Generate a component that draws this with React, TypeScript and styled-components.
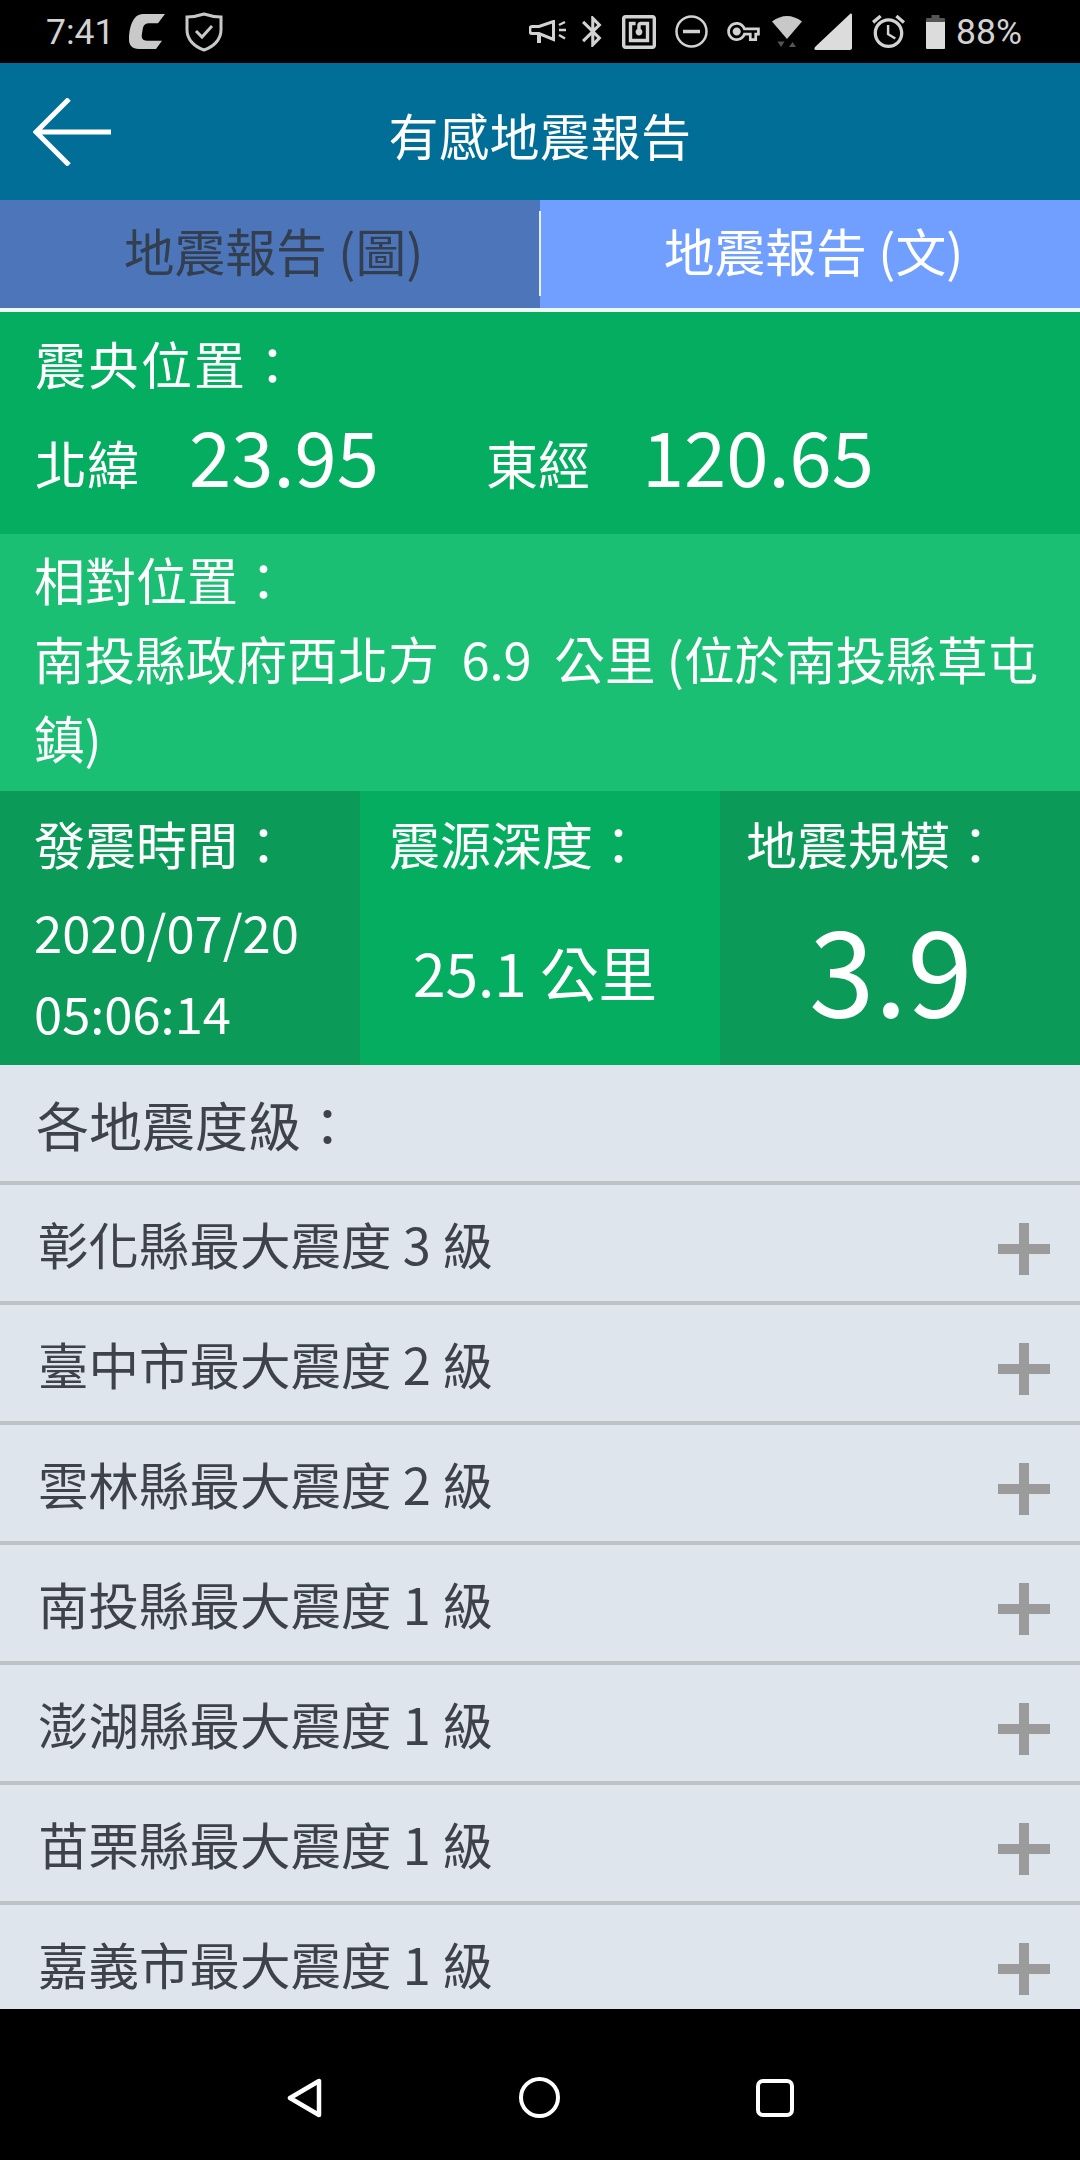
import styled, { createGlobalStyle } from "styled-components";

const GlobalStyle = createGlobalStyle`
  html, body {
    margin: 0;
    padding: 0;
    background: #000;
  }
  * {
    box-sizing: border-box;
  }
`;

const Screen = styled.div`
  width: 1080px;
  height: 2160px;
  display: flex;
  flex-direction: column;
  overflow: hidden;
  font-family: "Noto Sans CJK TC", "Noto Sans", sans-serif;
  color: #fff;
`;

const StatusBar = styled.div`
  height: 63px;
  flex: none;
  background: #000;
  display: flex;
  align-items: center;
  justify-content: space-between;
  padding: 0 58px 0 46px;
  color: #d2d2d2;
  font-family: Roboto, sans-serif;
  font-size: 35.5px;
`;

const StatusGroup = styled.div`
  display: flex;
  align-items: center;
`;

const StatusIcon = styled.svg<{ $left: number }>`
  display: block;
  flex: none;
  margin-left: ${(p) => p.$left}px;
`;

const Battery = styled.span`
  margin-left: 11px;
`;

const Header = styled.header`
  height: 137px;
  flex: none;
  background: #016e97;
  display: grid;
  grid-template-columns: 1fr auto 1fr;
  align-items: center;
  padding-left: 33px;
`;

const Title = styled.h1`
  margin: 4px 0 0 -33px;
  font-size: 50px;
  font-weight: 400;
  line-height: 1;
  letter-spacing: 0.5px;
`;

const Tabs = styled.div`
  height: 108px;
  flex: none;
  display: grid;
  grid-template-columns: 1fr 1fr;
`;

const Tab = styled.div<{ $active?: boolean }>`
  position: relative;
  display: flex;
  align-items: center;
  justify-content: center;
  padding: 0 0 9px 7px;
  font-size: 50.8px;
  background: ${(p) => (p.$active ? "#709fff" : "#4c76b9")};
  color: ${(p) => (p.$active ? "#fff" : "#333f50")};
  &::before {
    content: "";
    display: ${(p) => (p.$active ? "block" : "none")};
    position: absolute;
    left: -1px;
    top: 11px;
    bottom: 12px;
    width: 2px;
    background: #e8eefb;
  }
`;

const TabRule = styled.div`
  height: 4px;
  flex: none;
  background: #f0f8f4;
`;

const EpicenterPanel = styled.section`
  height: 222px;
  flex: none;
  background: #04ad5f;
  padding: 19px 35px 0;
`;

const Label = styled.div`
  font-size: 51px;
  line-height: 64px;
  white-space: nowrap;
`;

const WideLabel = styled(Label)`
  letter-spacing: 2px;
`;

const CoordRow = styled.div`
  display: flex;
  align-items: center;
  margin-top: 13px;
  height: 92px;
`;

const CoordName = styled.span<{ $left?: number }>`
  font-size: 52px;
  margin-top: 16px;
  margin-left: ${(p) => p.$left ?? 0}px;
`;

const CoordValue = styled.span<{ $left: number }>`
  font-size: 76px;
  line-height: 1;
  margin-left: ${(p) => p.$left}px;
`;

const RelativePanel = styled.section`
  height: 257px;
  flex: none;
  background: #1bbf73;
  padding: 13px 34px 0;
`;

const RelativeLabel = styled(Label)`
  margin-bottom: 8px;
`;

const RelativeLine = styled.div`
  font-size: 50.6px;
  line-height: 79px;
  white-space: nowrap;
`;

const StatsRow = styled.section`
  height: 274px;
  flex: none;
  display: grid;
  grid-template-columns: 360px 360px 360px;
`;

const StatCell = styled.div<{ $dark?: boolean; $pad: number }>`
  background: ${(p) => (p.$dark ? "#0c9a59" : "#04ad5f")};
  padding: 20px 0 0 ${(p) => p.$pad}px;
  display: flex;
  flex-direction: column;
`;

const StatBody = styled.div`
  flex: 1;
  display: flex;
  flex-direction: column;
  justify-content: center;
  padding-top: 4px;
`;

const TimeLine = styled.div`
  font-size: 50.7px;
  line-height: 81px;
  white-space: nowrap;
`;

const Depth = styled.div`
  font-size: 58.6px;
  line-height: 1;
  margin-left: 24px;
  white-space: nowrap;
`;

const Magnitude = styled.div`
  font-size: 118px;
  line-height: 1;
  margin: 0 0 12px 63px;
`;

const List = styled.section`
  flex: 1;
  min-height: 0;
  overflow: hidden;
  background: #dfe5ec;
  color: #3e434b;
`;

const ListHeading = styled.div`
  height: 120px;
  padding: 2px 36px 0;
  display: flex;
  align-items: center;
  font-size: 53px;
  border-bottom: 4px solid #bcc2c5;
`;

const Row = styled.div`
  height: 120px;
  padding: 0 30px 1px 38px;
  display: flex;
  align-items: center;
  justify-content: space-between;
  font-size: 50.5px;
  border-bottom: 4px solid #bcc2c5;
`;

const Plus = styled.div`
  width: 52px;
  height: 52px;
  margin-top: 12px;
  background:
    linear-gradient(#9b9b9b, #9b9b9b) center / 10px 100% no-repeat,
    linear-gradient(#9b9b9b, #9b9b9b) center / 100% 10px no-repeat;
`;

const NavBar = styled.nav`
  height: 151px;
  flex: none;
  background: #000;
  display: grid;
  grid-template-columns: repeat(3, 235px);
  padding: 26px 0 0 187px;
  align-items: center;
  justify-items: center;
`;

const rows = [
  ["彰化縣", 3],
  ["臺中市", 2],
  ["雲林縣", 2],
  ["南投縣", 1],
  ["澎湖縣", 1],
  ["苗栗縣", 1],
  ["嘉義市", 1],
] as const;

function App() {
  return (
    <Screen>
      <GlobalStyle />
      <StatusBar>
        <StatusGroup>
          <span>7:41</span>
          <StatusIcon $left={15} width="36" height="35" viewBox="0 0 36 34" preserveAspectRatio="none">
            <path
              d="M14 0H36L29 9H20C17 9 15 10 14 13L13 19C12 24 14 26 18 26H33L27 34H10C3 34 0 30 0 25C0 15 3 0 14 0Z"
              fill="#c9c9c9"
            />
          </StatusIcon>
          <StatusIcon $left={20} width="38" height="40" viewBox="0 0 38 40" fill="none">
            <path
              d="M19 2C25 4 31 5 36 5V18C36 28 28 35 19 38C10 35 2 28 2 18V5C7 5 13 4 19 2Z"
              stroke="#c8c8c8"
              strokeWidth="3"
            />
            <path d="M11 19L17 25L27 14" stroke="#c8c8c8" strokeWidth="3" />
          </StatusIcon>
        </StatusGroup>
        <StatusGroup>
          <StatusIcon $left={0} width="37" height="24" viewBox="0 0 37 24" fill="none" stroke="#d2d2d2">
            <path d="M3 6.5H10L24.5 1.5V19.5L10 13.5H3C0 13.5 0 6.5 3 6.5Z" strokeWidth="3" />
            <path d="M10 14V23" strokeWidth="4" />
            <path d="M30 5L36 2M30 10H37M30 15L36 18.5" strokeWidth="2.5" />
          </StatusIcon>
          <StatusIcon $left={16} width="20" height="33" viewBox="5 2 13 20">
            <path
              d="M17.71 7.71L12 2h-1v7.59L6.41 5 5 6.41 10.59 12 5 17.59 6.41 19 11 14.41V22h1l5.71-5.71-4.3-4.29 4.3-4.29zM13 5.83l1.88 1.88L13 9.59V5.83zm1.88 10.46L13 18.17v-3.76l1.88 1.88z"
              fill="#d2d2d2"
            />
          </StatusIcon>
          <StatusIcon $left={20} width="34" height="34" viewBox="2 2 20 20">
            <path
              d="M20 2H4c-1.1 0-2 .9-2 2v16c0 1.1.9 2 2 2h16c1.1 0 2-.9 2-2V4c0-1.1-.9-2-2-2zm0 18H4V4h16v16zM18 6h-5c-1.1 0-2 .9-2 2v2.28c-.6.35-1 .98-1 1.72 0 1.1.9 2 2 2s2-.9 2-2c0-.74-.4-1.38-1-1.72V8h3v8H8V8h2V6H6v12h12V6z"
              fill="#d2d2d2"
            />
          </StatusIcon>
          <StatusIcon $left={19} width="33" height="33" viewBox="0 0 33 33" fill="none" stroke="#d2d2d2">
            <circle cx="16.5" cy="16.5" r="15" strokeWidth="2.5" />
            <path d="M8 16.5H25" strokeWidth="3.5" />
          </StatusIcon>
          <StatusIcon $left={19} width="33" height="19" viewBox="0 5 24 14">
            <path
              d="M22 19h-6v-4h-2.68c-1.14 2.42-3.6 4-6.32 4-3.86 0-7-3.14-7-7s3.14-7 7-7c2.72 0 5.17 1.58 6.32 4H24v6h-2v4zm-4-2h2v-4h2v-2H11.94l-.23-.67C11.01 8.34 9.11 7 7 7c-2.76 0-5 2.24-5 5s2.24 5 5 5c2.11 0 4.01-1.34 4.71-3.33l.23-.67H18v4zM7 15c-1.65 0-3-1.35-3-3s1.35-3 3-3 3 1.35 3 3-1.35 3-3 3z"
              fill="#d2d2d2"
            />
          </StatusIcon>
          <StatusIcon $left={12} width="30" height="32" viewBox="0 0 30 32">
            <path d="M0 5.5Q15 -5.5 30 5.5L15 23Z" fill="#c8c8c8" />
            <path d="M5.5 25.5H12.5L9 31ZM17 31H24L20.5 26Z" fill="#555" />
          </StatusIcon>
          <StatusIcon $left={12} width="38" height="37" viewBox="0 0 38 37">
            <path d="M36 1C37 0 38 1 38 2V35C38 36 37 37 36 37H2C0 37 0 36 1 34Z" fill="#dcdcdc" />
          </StatusIcon>
          <StatusIcon $left={20} width="33" height="33" viewBox="2 2 20 20">
            <path
              d="M22 5.72l-4.6-3.86-1.29 1.53 4.6 3.86L22 5.72zM7.88 3.39L6.6 1.86 2 5.71l1.29 1.53 4.59-3.85zM12.5 8H11v6l4.75 2.85.75-1.23-4-2.37V8zM12 4c-4.97 0-9 4.03-9 9s4.03 9 9 9 9-4.03 9-9-4.03-9-9-9zm0 16c-3.87 0-7-3.13-7-7s3.13-7 7-7 7 3.13 7 7-3.13 7-7 7z"
              fill="#d2d2d2"
            />
          </StatusIcon>
          <StatusIcon $left={21} width="19" height="34" viewBox="0 0 19 34">
            <path d="M5.5 0H13.5V3H18C19 3 19 4 19 4V7H0V4C0 4 0 3 1 3H5.5Z" fill="#555" />
            <path d="M0 7H19V33C19 34 18 34 18 34H1C0 34 0 33 0 33Z" fill="#dcdcdc" />
          </StatusIcon>
          <Battery>88%</Battery>
        </StatusGroup>
      </StatusBar>
      <Header>
        <svg width="78" height="68" viewBox="0 0 78 68" fill="none" stroke="#fff" strokeWidth="5">
          <path d="M36 1L3 34L36 67M3 34H78" />
        </svg>
        <Title>有感地震報告</Title>
      </Header>
      <Tabs>
        <Tab>地震報告 (圖)</Tab>
        <Tab $active>地震報告 (文)</Tab>
      </Tabs>
      <TabRule />
      <EpicenterPanel>
        <WideLabel>震央位置：</WideLabel>
        <CoordRow>
          <CoordName>北緯</CoordName>
          <CoordValue $left={50}>23.95</CoordValue>
          <CoordName $left={107}>東經</CoordName>
          <CoordValue $left={52}>120.65</CoordValue>
        </CoordRow>
      </EpicenterPanel>
      <RelativePanel>
        <RelativeLabel>相對位置：</RelativeLabel>
        <RelativeLine>南投縣政府西北方&nbsp; 6.9&nbsp; 公里 (位於南投縣草屯</RelativeLine>
        <RelativeLine>鎮)</RelativeLine>
      </RelativePanel>
      <StatsRow>
        <StatCell $dark $pad={34}>
          <Label>發震時間：</Label>
          <StatBody>
            <TimeLine>2020/07/20</TimeLine>
            <TimeLine>05:06:14</TimeLine>
          </StatBody>
        </StatCell>
        <StatCell $pad={29}>
          <Label>震源深度：</Label>
          <StatBody>
            <Depth>25.1 公里</Depth>
          </StatBody>
        </StatCell>
        <StatCell $dark $pad={26}>
          <Label>地震規模：</Label>
          <StatBody>
            <Magnitude>3.9</Magnitude>
          </StatBody>
        </StatCell>
      </StatsRow>
      <List>
        <ListHeading>各地震度級：</ListHeading>
        {rows.map(([county, level]) => (
          <Row key={county}>
            <span>
              {county}最大震度 {level} 級
            </span>
            <Plus />
          </Row>
        ))}
      </List>
      <NavBar>
        <svg width="35" height="40" viewBox="0 0 35 40" fill="none">
          <path d="M32 3V37L3 20Z" stroke="#fff" strokeWidth="4.5" strokeLinejoin="round" />
        </svg>
        <svg width="41" height="41" viewBox="0 0 41 41" fill="none">
          <circle cx="20.5" cy="20.5" r="18.5" stroke="#fff" strokeWidth="4" />
        </svg>
        <svg width="38" height="38" viewBox="0 0 38 38" fill="none">
          <rect x="2" y="2" width="34" height="34" rx="5" stroke="#fff" strokeWidth="4" />
        </svg>
      </NavBar>
    </Screen>
  );
}

export default App;
